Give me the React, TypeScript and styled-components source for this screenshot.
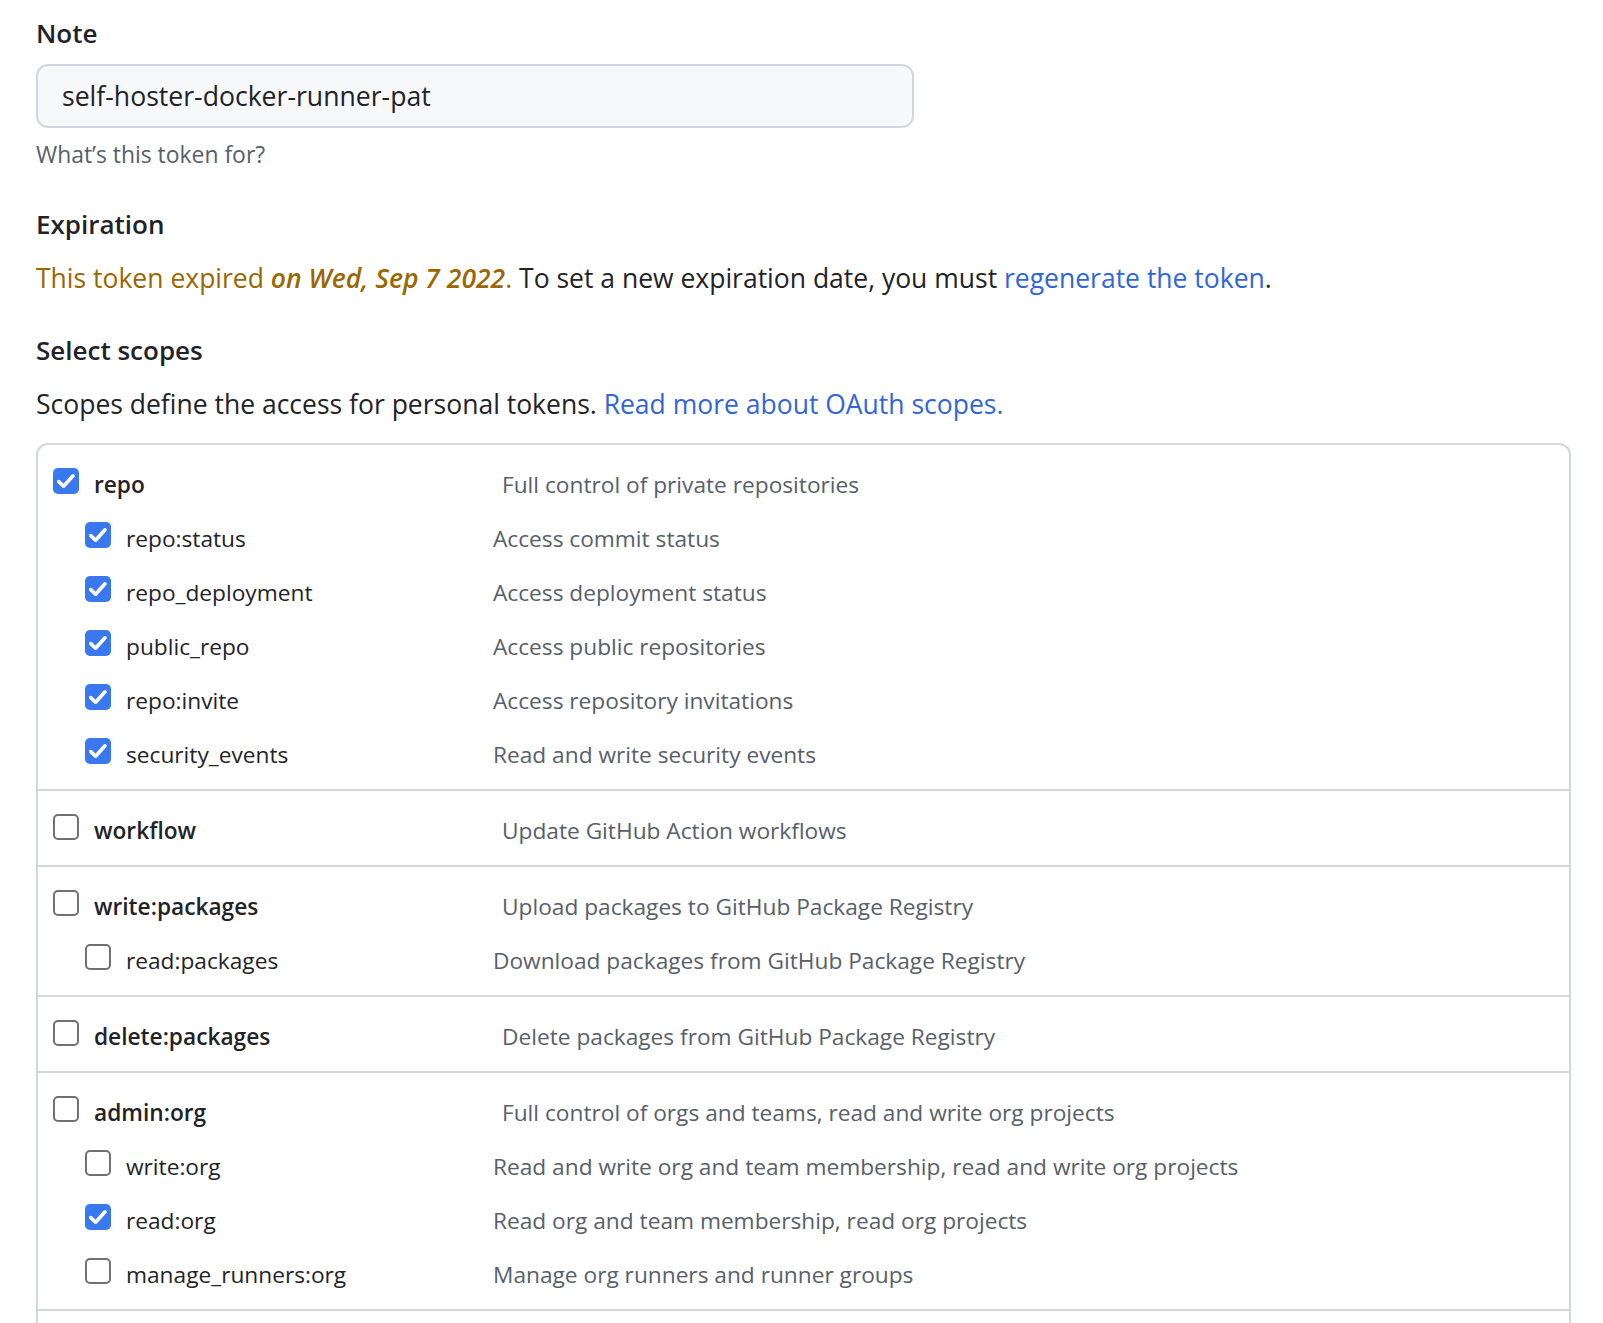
import React from "react";
import styled, { createGlobalStyle } from "styled-components";

type Scope = {
  name: string;
  description: string;
  checked: boolean;
  children?: { name: string; description: string; checked: boolean }[];
};

const scopes: Scope[] = [
  {
    name: "repo",
    description: "Full control of private repositories",
    checked: true,
    children: [
      { name: "repo:status", description: "Access commit status", checked: true },
      { name: "repo_deployment", description: "Access deployment status", checked: true },
      { name: "public_repo", description: "Access public repositories", checked: true },
      { name: "repo:invite", description: "Access repository invitations", checked: true },
      { name: "security_events", description: "Read and write security events", checked: true },
    ],
  },
  { name: "workflow", description: "Update GitHub Action workflows", checked: false },
  {
    name: "write:packages",
    description: "Upload packages to GitHub Package Registry",
    checked: false,
    children: [
      { name: "read:packages", description: "Download packages from GitHub Package Registry", checked: false },
    ],
  },
  { name: "delete:packages", description: "Delete packages from GitHub Package Registry", checked: false },
  {
    name: "admin:org",
    description: "Full control of orgs and teams, read and write org projects",
    checked: false,
    children: [
      { name: "write:org", description: "Read and write org and team membership, read and write org projects", checked: false },
      { name: "read:org", description: "Read org and team membership, read org projects", checked: true },
      { name: "manage_runners:org", description: "Manage org runners and runner groups", checked: false },
    ],
  },
  { name: "admin:public_key", description: "Full control of user public keys", checked: false },
];

const App: React.FC = () => {
  return (
    <>
      <GlobalStyle />
      <Page>
        <Heading>Note</Heading>
        <NoteInput readOnly value="self-hoster-docker-runner-pat" />
        <Help>What’s this token for?</Help>

        <Heading $gap={33}>Expiration</Heading>
        <Paragraph>
          <Warn>
            This token expired <em>on Wed, Sep 7 2022</em>.
          </Warn>{" "}
          To set a new expiration date, you must <Link href="#">regenerate the token</Link>.
        </Paragraph>

        <Heading $gap={34}>Select scopes</Heading>
        <Paragraph>
          Scopes define the access for personal tokens.{" "}
          <Link href="#">Read more about OAuth scopes.</Link>
        </Paragraph>

        <ScopeBox>
          {scopes.map((scope) => (
            <Group key={scope.name}>
              <Row $sub={false}>
                <Check checked={scope.checked} />
                <ScopeName $sub={false}>{scope.name}</ScopeName>
                <Desc>{scope.description}</Desc>
              </Row>
              {scope.children?.map((child) => (
                <Row key={child.name} $sub>
                  <Check checked={child.checked} />
                  <ScopeName $sub>{child.name}</ScopeName>
                  <Desc>{child.description}</Desc>
                </Row>
              ))}
            </Group>
          ))}
        </ScopeBox>
      </Page>
    </>
  );
};

const Check: React.FC<{ checked: boolean }> = ({ checked }) => (
  <Box $checked={checked}>
    {checked && (
      <svg width="26" height="26" viewBox="0 0 26 26">
        <path
          d="M5.8 13.6 L10.6 18.2 L20 7.8"
          fill="none"
          stroke="#fff"
          strokeWidth="3.6"
          strokeLinecap="round"
          strokeLinejoin="round"
        />
      </svg>
    )}
  </Box>
);

const GlobalStyle = createGlobalStyle`
  * {
    box-sizing: border-box;
  }

  html, body {
    margin: 0;
    padding: 0;
    background: #ffffff;
  }

  body {
    font-family: "Open Sans", "Noto Sans", "Liberation Sans", sans-serif;
    color: #1f2328;
    overflow: hidden;
  }
`;

const Page = styled.div`
  display: flex;
  flex-direction: column;
  align-items: flex-start;
  padding: 15px 0 0 36px;
  width: 1603px;

  & > * {
    flex-shrink: 0;
  }
`;

const Heading = styled.h2<{ $gap?: number }>`
  margin: ${(p) => p.$gap ?? 0}px 0 0;
  font-size: 26px;
  line-height: 36px;
  font-weight: 600;
  color: #1f2328;
`;

const NoteInput = styled.input`
  margin-top: 13px;
  width: 878px;
  height: 64px;
  padding: 0 22px 0 24px;
  border: 2px solid #d0d7de;
  border-radius: 12px;
  background: #f6f8fa;
  font-family: inherit;
  font-size: 26.6px;
  color: #1f2328;
  outline: none;
`;

const Help = styled.p`
  margin: 9px 0 0;
  font-size: 22.9px;
  line-height: 36px;
  color: #57606a;
`;

const Paragraph = styled.p`
  margin: 16px 0 0;
  font-size: 26.5px;
  line-height: 40px;
  color: #1f2328;
`;

const Warn = styled.span`
  color: #9a6700;

  em {
    font-weight: 600;
  }
`;

const Link = styled.a`
  color: #3166d8;
  text-decoration: none;
`;

const ScopeBox = styled.div`
  margin-top: 19px;
  width: 1535px;
  border: 2px solid #d0d7de;
  border-bottom: none;
  border-radius: 12px 12px 0 0;
`;

const Group = styled.div`
  padding: 12px 0 8px;
  border-bottom: 2px solid #d0d7de;
`;

const Row = styled.div<{ $sub: boolean }>`
  display: flex;
  align-items: center;
  height: 54px;
  padding-left: ${(p) => (p.$sub ? 47 : 15)}px;
`;

const Box = styled.span<{ $checked: boolean }>`
  flex: none;
  display: flex;
  width: 26px;
  height: 26px;
  margin-bottom: 7px;
  border-radius: 5px;
  background: ${(p) => (p.$checked ? "#3a78f0" : "#ffffff")};
  border: ${(p) => (p.$checked ? "none" : "2.5px solid #707070")};
`;

const ScopeName = styled.span<{ $sub: boolean }>`
  width: ${(p) => (p.$sub ? 382 : 423)}px;
  padding-left: 15px;
  font-size: 22.7px;
  font-weight: ${(p) => (p.$sub ? 400 : 600)};
  color: #1f2328;
`;

const Desc = styled.span`
  font-size: 22.7px;
  color: #57606a;
`;

export default App;
